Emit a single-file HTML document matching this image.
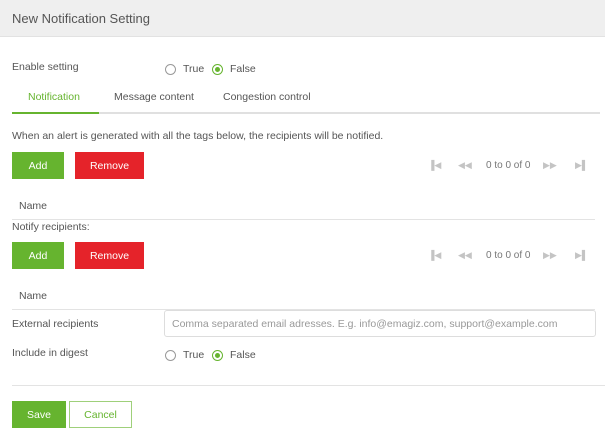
<!DOCTYPE html>
<html><head><meta charset="utf-8"><style>
*{margin:0;padding:0;box-sizing:border-box}
body{width:605px;height:441px;background:#fff;font-family:"Liberation Sans",sans-serif;font-size:10.5px;color:#555;position:relative;overflow:hidden}
.a{position:absolute;white-space:nowrap}
.hdr{position:absolute;left:0;top:0;width:605px;height:37px;background:#efefef;border-bottom:1px solid #e2e2e2}
.btn{position:absolute;height:27px;color:#fff;font-size:10.5px;text-align:center;line-height:28px}
.g{background:#66b42f}.r{background:#e5232a}
.rad{position:absolute;width:11px;height:11px;border:1px solid #999;border-radius:50%}
.rad.on{border-color:#66b42f}
.rad.on:after{content:"";position:absolute;left:2px;top:2px;width:5px;height:5px;border-radius:50%;background:#66b42f}
.line{position:absolute;height:1px;background:#e3e3e3}
.pg{position:absolute;color:#c4c4c4;font-size:9px}
</style></head><body>
<div class="hdr"></div>
<div class="a" style="left:12px;top:11px;font-size:13px;color:#555">New Notification Setting</div>

<div class="a" style="left:12px;top:61px">Enable setting</div>
<div class="rad" style="left:165px;top:64px"></div><div class="a" style="left:183px;top:63px">True</div>
<div class="rad on" style="left:212px;top:64px"></div><div class="a" style="left:230px;top:63px">False</div>

<div class="a" style="left:28px;top:91px;color:#66b42f">Notification</div>
<div class="a" style="left:114px;top:91px">Message content</div>
<div class="a" style="left:223px;top:91px">Congestion control</div>
<div class="line" style="left:12px;top:112px;width:588px;height:2px;background:#e0e0e0"></div>
<div class="line" style="left:12px;top:112px;width:87px;height:2px;background:#66b42f"></div>

<div class="a" style="left:12px;top:130px">When an alert is generated with all the tags below, the recipients will be notified.</div>
<div class="btn g" style="left:12px;top:152px;width:52px">Add</div>
<div class="btn r" style="left:75px;top:152px;width:69px">Remove</div>
<div class="pg" style="left:428px;top:160px">▐◀</div>
<div class="pg" style="left:458px;top:160px">◀◀</div>
<div class="a" style="left:486px;top:160px;color:#777;font-size:10px">0 to 0 of 0</div>
<div class="pg" style="left:543px;top:160px">▶▶</div>
<div class="pg" style="left:575px;top:160px">▶▌</div>

<div class="a" style="left:19px;top:200px">Name</div>
<div class="line" style="left:12px;top:219px;width:583px"></div>
<div class="a" style="left:12px;top:221px">Notify recipients:</div>
<div class="btn g" style="left:12px;top:242px;width:52px">Add</div>
<div class="btn r" style="left:75px;top:242px;width:69px">Remove</div>
<div class="pg" style="left:428px;top:250px">▐◀</div>
<div class="pg" style="left:458px;top:250px">◀◀</div>
<div class="a" style="left:486px;top:250px;color:#777;font-size:10px">0 to 0 of 0</div>
<div class="pg" style="left:543px;top:250px">▶▶</div>
<div class="pg" style="left:575px;top:250px">▶▌</div>

<div class="a" style="left:19px;top:290px">Name</div>
<div class="line" style="left:12px;top:309px;width:583px"></div>
<div class="a" style="left:12px;top:318px">External recipients</div>
<div class="a" style="left:164px;top:310px;width:432px;height:27px;border:1px solid #ddd;border-radius:3px;padding:7px 0 0 7px;color:#999">Comma separated email adresses. E.g. info@emagiz.com, support@example.com</div>
<div class="a" style="left:12px;top:347px">Include in digest</div>
<div class="rad" style="left:165px;top:350px"></div><div class="a" style="left:183px;top:349px">True</div>
<div class="rad on" style="left:212px;top:350px"></div><div class="a" style="left:230px;top:349px">False</div>

<div class="line" style="left:12px;top:385px;width:593px"></div>
<div class="btn g" style="left:12px;top:401px;width:54px">Save</div>
<div class="btn" style="left:69px;top:401px;width:63px;border:1px solid #9fd07a;color:#66b42f;line-height:26px">Cancel</div>
</body></html>
